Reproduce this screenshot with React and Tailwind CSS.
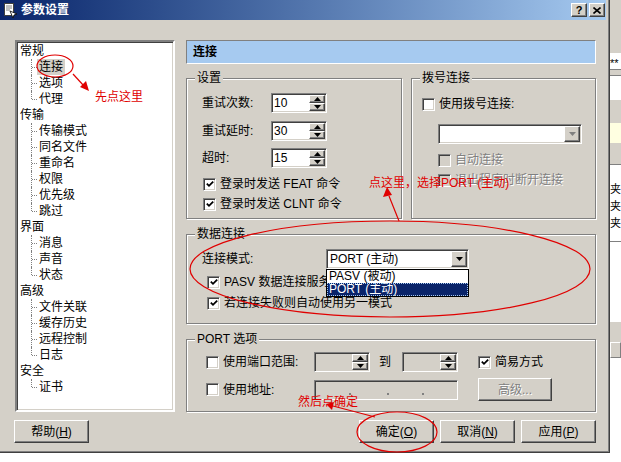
import React from 'react'

// classic win2k bevels
const raised =
  'border border-t-white border-l-white border-r-[#404040] border-b-[#404040] shadow-[inset_-1px_-1px_0_#808080] bg-[#d4d0c8]'
const sunken =
  'border border-t-[#808080] border-l-[#808080] border-r-white border-b-white shadow-[inset_1px_1px_0_#404040,inset_-1px_-1px_0_#d4d0c8]'

const tree = [
  { label: '常规', children: ['连接', '选项', '代理'] },
  { label: '传输', children: ['传输模式', '同名文件', '重命名', '权限', '优先级', '跳过'] },
  { label: '界面', children: ['消息', '声音', '状态'] },
  { label: '高级', children: ['文件关联', '缓存历史', '远程控制', '日志'] },
  { label: '安全', children: ['证书'] },
]

function Tri({ up, grey }) {
  return (
    <svg width="7" height="4" viewBox="0 0 7 4">
      <polygon points={up ? '3.5,0 7,4 0,4' : '0,0 7,0 3.5,4'} fill={grey ? '#808080' : '#000'} />
    </svg>
  )
}

function Check({ checked, disabled }) {
  return (
    <span
      className={`w-[13px] h-[13px] shrink-0 flex items-center justify-center ${sunken} ${
        disabled ? 'bg-[#d4d0c8]' : 'bg-white'
      }`}
    >
      {checked && (
        <svg width="8" height="8" viewBox="0 0 8 8">
          <polyline points="0.8,3.6 3,5.8 7.2,1.6" fill="none" stroke="#000" strokeWidth="1.8" />
        </svg>
      )}
    </span>
  )
}

function CheckRow({ checked, disabled, label, className = '', labelClass = '' }) {
  return (
    <div className={`flex items-center gap-[4px] h-[16px] ${className}`}>
      <Check checked={checked} disabled={disabled} />
      <span className={`${disabled ? 'text-[#808080] [text-shadow:1px_1px_0_#fff]' : ''} ${labelClass}`}>{label}</span>
    </div>
  )
}

function Spin({ value, disabled }) {
  return (
    <div className={`flex w-[56px] h-[20px] shrink-0 ${sunken} ${disabled ? 'bg-[#d4d0c8]' : 'bg-white'}`}>
      <div className="flex-1 pl-[2px] leading-[18px]">{value}</div>
      <div className="flex flex-col w-[17px] py-[1px] pr-[1px]">
        <div className={`h-[8px] flex items-center justify-center ${raised}`}>
          <Tri up />
        </div>
        <div className={`h-[8px] flex items-center justify-center ${raised}`}>
          <Tri />
        </div>
      </div>
    </div>
  )
}

function Combo({ value, grey, className = '' }) {
  return (
    <div className={`flex h-[20px] bg-white ${sunken} ${className}`}>
      <div className="flex-1 pl-[3px] leading-[18px]">{value}</div>
      <div className="p-[1px]">
        <div className={`w-[16px] h-[16px] flex items-center justify-center ${raised}`}>
          <Tri grey={grey} />
        </div>
      </div>
    </div>
  )
}

function Group({ title, className = '', children }) {
  return (
    <div className={`relative border border-[#808080] shadow-[inset_1px_1px_0_#fff,1px_1px_0_#fff] ${className}`}>
      <span className="absolute -top-[9px] left-[8px] px-[2px] bg-[#d4d0c8] leading-[16px]">{title}</span>
      {children}
    </div>
  )
}

function Button({ children, disabled, className = '' }) {
  return (
    <div
      className={`h-[23px] flex items-center justify-center ${raised} ${
        disabled ? 'text-[#808080] [text-shadow:1px_1px_0_#fff]' : ''
      } ${className}`}
    >
      {children}
    </div>
  )
}

function Tree() {
  return (
    <div className="w-[160px] h-[372px] bg-white border-2 border-t-[#808080] border-l-[#808080] border-r-white border-b-white shadow-[inset_1px_1px_0_#404040,inset_-1px_-1px_0_#d4d0c8] pt-[1px]">
      {tree.map((g) => (
        <div key={g.label}>
          <div className="h-[16px] leading-[16px] pl-[3px]">{g.label}</div>
          {g.children.map((c, i) => {
            const last = i === g.children.length - 1
            return (
              <div key={c} className="flex h-[16px]">
                <div className="relative w-[20px] shrink-0">
                  <div
                    className={`absolute left-[14px] top-0 border-l border-dotted border-[#808080] ${
                      last ? 'h-[8px]' : 'h-[16px]'
                    }`}
                  />
                  <div className="absolute left-[15px] top-[8px] w-[5px] border-t border-dotted border-[#808080]" />
                </div>
                <span className={`px-[2px] leading-[16px] ${c === '连接' ? 'bg-[#d4d0c8]' : ''}`}>{c}</span>
              </div>
            )
          })}
        </div>
      ))}
    </div>
  )
}

function TitleIcon() {
  return (
    <svg width="15" height="15" viewBox="0 0 15 15">
      <rect x="1.5" y="0.5" width="9" height="12" fill="#fff" stroke="#404040" />
      <line x1="3" y1="3" x2="9" y2="3" stroke="#808080" />
      <line x1="3" y1="5" x2="9" y2="5" stroke="#808080" />
      <line x1="3" y1="7" x2="7" y2="7" stroke="#808080" />
      <polygon points="7,8 14,11 11,12 10,15" fill="#fff" stroke="#000" strokeWidth="0.8" />
    </svg>
  )
}

// sliver of the window behind the dialog
function BehindStrip() {
  return (
    <div className="w-[11px] h-[462px] flex flex-col bg-white text-[11px] leading-[12px] overflow-hidden">
      <div className="h-[54px] bg-[#d4d0c8] border-b border-white" />
      <div className="h-[15px] pt-[3px]">**</div>
      <div className="h-[7px] bg-[#d4d0c8] border-y border-[#808080]" />
      <div className="h-[24px]" />
      <div className="h-[23px] bg-[#d4d0c8]" />
      <div className="h-[20px] bg-[#ffffe1]" />
      <div className="h-[22px] bg-[#d4d0c8] border-b border-[#808080]" />
      <div className="h-[16px]" />
      <div className="h-[17px] leading-[17px]">夹</div>
      <div className="h-[17px] leading-[17px]">夹</div>
      <div className="h-[17px] leading-[17px]">夹</div>
      <div className="h-[10px] border-b border-[#808080]" />
      <div className="h-[80px]" />
      <div className="h-[20px] bg-[#d4d0c8]" />
      <div className="h-[16px] bg-[#d4d0c8] border border-t-white border-l-white border-r-[#808080] border-b-[#808080]" />
      <div className="flex-1" />
    </div>
  )
}

export default function App() {
  return (
    <div className="relative w-[621px] h-[462px] bg-white flex overflow-hidden text-[12px] text-black font-['Liberation_Sans','Noto_Sans_CJK_SC',sans-serif]">
      {/* ── DIALOG ───────────────────────────────── */}
      <div className="w-[610px] h-[453px] bg-[#d4d0c8] border-r border-b border-[#404040] shadow-[inset_-1px_-1px_0_#808080] flex flex-col">
        {/* title bar */}
        <div className="h-[20px] mr-[3px] flex items-center pl-[3px] bg-linear-to-r from-[#0a246a] to-[#a6caf0]">
          <TitleIcon />
          <span className="ml-[3px] text-white font-bold text-[12px] leading-[20px]">参数设置</span>
          <div className="ml-auto flex gap-[2px] pr-[1px]">
            <div className={`w-[16px] h-[14px] flex items-center justify-center font-bold text-[11px] leading-[12px] ${raised}`}>?</div>
            <div className={`w-[16px] h-[14px] flex items-center justify-center ${raised}`}>
              <svg width="8" height="7" viewBox="0 0 8 7">
                <path d="M0.5 0.5 L7.5 6.5 M7.5 0.5 L0.5 6.5" stroke="#000" strokeWidth="1.6" />
              </svg>
            </div>
          </div>
        </div>

        {/* body */}
        <div className="flex pl-[15px] pt-[20px] gap-[11px]">
          <Tree />

          <div className="w-[410px] flex flex-col">
            <div className="h-[24px] bg-[#a6caf0] border border-t-[#808080] border-l-[#808080] border-r-white border-b-white pl-[6px] flex items-center font-bold">
              连接
            </div>

            <div className="flex gap-[9px] mt-[14px]">
              <Group title="设置" className="w-[216px] h-[141px] pl-[15px] pt-[14px]">
                <div className="flex items-center h-[20px]">
                  <span className="w-[69px]">重试次数:</span>
                  <Spin value="10" />
                </div>
                <div className="flex items-center h-[20px] mt-[8px]">
                  <span className="w-[69px]">重试延时:</span>
                  <Spin value="30" />
                </div>
                <div className="flex items-center h-[20px] mt-[7px]">
                  <span className="w-[69px]">超时:</span>
                  <Spin value="15" />
                </div>
                <CheckRow checked label="登录时发送 FEAT 命令" className="mt-[8px] ml-[1px]" />
                <CheckRow checked label="登录时发送 CLNT 命令" className="mt-[4px] ml-[1px]" />
              </Group>

              <Group title="拨号连接" className="w-[185px] h-[141px] pl-[10px] pt-[17px]">
                <CheckRow label="使用拨号连接:" />
                <Combo value="" grey className="w-[144px] ml-[16px] mt-[12px]" />
                <CheckRow disabled label="自动连接" className="ml-[16px] mt-[8px]" />
                <CheckRow disabled label="退出程序时断开连接" className="ml-[16px] mt-[4px]" />
              </Group>
            </div>

            <Group title="数据连接" className="h-[90px] mt-[15px] pl-[15px] pt-[14px]">
              <div className="flex items-center h-[20px]">
                <span className="w-[124px]">连接模式:</span>
                <div className="relative">
                  <Combo value="PORT (主动)" className="w-[143px]" />
                  <div className="absolute left-0 top-full w-[143px] h-[28px] bg-white border border-black z-10">
                    <div className="h-[13px] leading-[13px] pl-[2px]">PASV (被动)</div>
                    <div className="h-[13px] leading-[13px] pl-[2px] bg-[#0a246a] text-white outline outline-dotted outline-1 -outline-offset-1 outline-[#a6caf0]">
                      PORT (主动)
                    </div>
                  </div>
                </div>
              </div>
              <CheckRow
                checked
                label="PASV 数据连接服务器"
                labelClass="w-[102px] overflow-hidden whitespace-nowrap"
                className="mt-[5px] ml-[5px]"
              />
              <CheckRow checked label="若连接失败则自动使用另一模式" className="mt-[5px] ml-[5px]" />
            </Group>

            <Group title="PORT 选项" className="h-[73px] mt-[15px] pl-[19px] pt-[12px]">
              <div className="flex items-center h-[20px]">
                <CheckRow label="使用端口范围:" className="w-[108px]" />
                <Spin disabled />
                <span className="ml-[9px] w-[23px]">到</span>
                <Spin disabled />
                <CheckRow checked label="简易方式" className="ml-[20px]" />
              </div>
              <div className="flex items-center h-[23px] mt-[6px]">
                <CheckRow label="使用地址:" className="w-[108px]" />
                <div className={`w-[144px] h-[20px] bg-[#d4d0c8] flex items-end pb-[4px] ${sunken}`}>
                  <span className="ml-[34px] w-[2px] h-[2px] bg-[#808080]" />
                  <span className="ml-[36px] w-[2px] h-[2px] bg-[#808080]" />
                  <span className="ml-[33px] w-[2px] h-[2px] bg-[#808080]" />
                </div>
                <Button disabled className="w-[74px] ml-[20px]">高级...</Button>
              </div>
            </Group>
          </div>
        </div>

        {/* buttons */}
        <div className="flex w-[596px] pl-[14px] mt-[8px]">
          <Button className="w-[75px]">
            帮助(<span className="underline">H</span>)
          </Button>
          <div className="ml-auto flex gap-[6px]">
            <Button className="w-[75px]">
              确定(<span className="underline">O</span>)
            </Button>
            <Button className="w-[75px]">
              取消(<span className="underline">N</span>)
            </Button>
            <Button className="w-[75px]">
              应用(<span className="underline">P</span>)
            </Button>
          </div>
        </div>
      </div>

      <BehindStrip />

      {/* ── RED ANNOTATIONS (overlay) ───────────────── */}
      <svg className="absolute inset-0 pointer-events-none z-20" width="621" height="462" viewBox="0 0 621 462">
        <g fill="none" stroke="#e00000" strokeWidth="1.2">
          <ellipse cx="55" cy="66" rx="18" ry="11" />
          <line x1="73" y1="74" x2="84" y2="86" />
          <ellipse cx="390" cy="269" rx="200" ry="48" />
          <line x1="399" y1="221" x2="389" y2="196" />
          <ellipse cx="397" cy="432" rx="40" ry="20" />
          <line x1="375" y1="417" x2="333" y2="406" />
        </g>
        <g fill="#e00000">
          <polygon points="89,91 80,87 86,81" />
          <polygon points="387,187 383,197 392,195" />
          <polygon points="326,404 334,402 332,410" />
        </g>
      </svg>
      <span className="absolute left-[95px] top-[89px] z-20 text-[#e00000] leading-[16px]">先点这里</span>
      <span className="absolute left-[369px] top-[175px] z-20 text-[#e00000] leading-[16px]">点这里，选择PORT (主动)</span>
      <span className="absolute left-[298px] top-[394px] z-20 text-[#e00000] leading-[16px]">然后点确定</span>
    </div>
  )
}
